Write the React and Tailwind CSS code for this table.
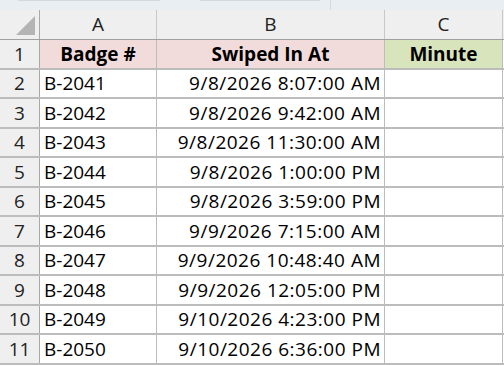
const rows = [
  ["B-2041", "9/8/2026 8:07:00 AM"],
  ["B-2042", "9/8/2026 9:42:00 AM"],
  ["B-2043", "9/8/2026 11:30:00 AM"],
  ["B-2044", "9/8/2026 1:00:00 PM"],
  ["B-2045", "9/8/2026 3:59:00 PM"],
  ["B-2046", "9/9/2026 7:15:00 AM"],
  ["B-2047", "9/9/2026 10:48:40 AM"],
  ["B-2048", "9/9/2026 12:05:00 PM"],
  ["B-2049", "9/10/2026 4:23:00 PM"],
  ["B-2050", "9/10/2026 6:36:00 PM"],
];

export default function App() {
  return (
    <div
      className="w-[504px] h-[366px] overflow-hidden bg-white text-black"
      style={{ fontFamily: '"Open Sans", "Noto Sans", sans-serif' }}
    >
      {/* formula bar edge */}
      <div className="h-[10px] bg-[#e9eef2] flex items-start">
        <div className="ml-[18px] w-[142px] h-px bg-[#d3d8dc]" />
        <div className="ml-[40px] w-[120px] h-px bg-[#d3d8dc]" />
        <div className="ml-[10px] w-px h-[10px] bg-[#d3d8dc]" />
      </div>

      {/* column headers */}
      <div className="flex h-[30px] bg-[#efefef] border-b border-[#a0a0a0] text-[19px] text-[#222]">
        <div className="relative w-[40px] border-r border-[#a8a8a8]">
          <div className="absolute left-[16px] top-[6px] w-[19px] h-[19px] bg-[#b4b4b4] [clip-path:polygon(100%_0,100%_100%,0_100%)]" />
        </div>
        <div className="w-[117px] flex items-center justify-center border-r border-[#c8c8c8]">A</div>
        <div className="w-[228px] flex items-center justify-center border-r border-[#c8c8c8]">B</div>
        <div className="w-[118px] flex items-center justify-center border-r border-[#c8c8c8]">C</div>
      </div>

      {/* row 1 */}
      <div className="flex h-[29.5px] border-b-2 border-[#bcbcbc] text-[19px]">
        <div className="w-[40px] bg-[#efefef] border-r border-[#a8a8a8] flex items-center justify-center text-[#222]">1</div>
        <div className="w-[117px] bg-[#f2dcdb] border-r border-[#bcbcbc] flex items-center justify-center font-bold">Badge #</div>
        <div className="w-[228px] bg-[#f2dcdb] border-r border-[#bcbcbc] flex items-center justify-center font-bold">Swiped In At</div>
        <div className="w-[118px] bg-[#d8e4bc] border-r border-[#bcbcbc] flex items-center justify-center font-bold">Minute</div>
      </div>

      {rows.map(([badge, time], i) => (
        <div key={badge} className="flex h-[29.5px] border-b-2 border-[#bcbcbc] text-[19px]">
          <div className="w-[40px] bg-[#efefef] border-r border-[#a8a8a8] flex items-center justify-center text-[#222]">
            {i + 2}
          </div>
          <div className="w-[117px] border-r border-[#bcbcbc] flex items-center pl-[4px]">{badge}</div>
          <div className="w-[228px] border-r border-[#bcbcbc] flex items-center justify-end pr-[3px] tracking-[0.5px]">{time}</div>
          <div className="w-[118px] border-r border-[#bcbcbc]" />
        </div>
      ))}
    </div>
  );
}
